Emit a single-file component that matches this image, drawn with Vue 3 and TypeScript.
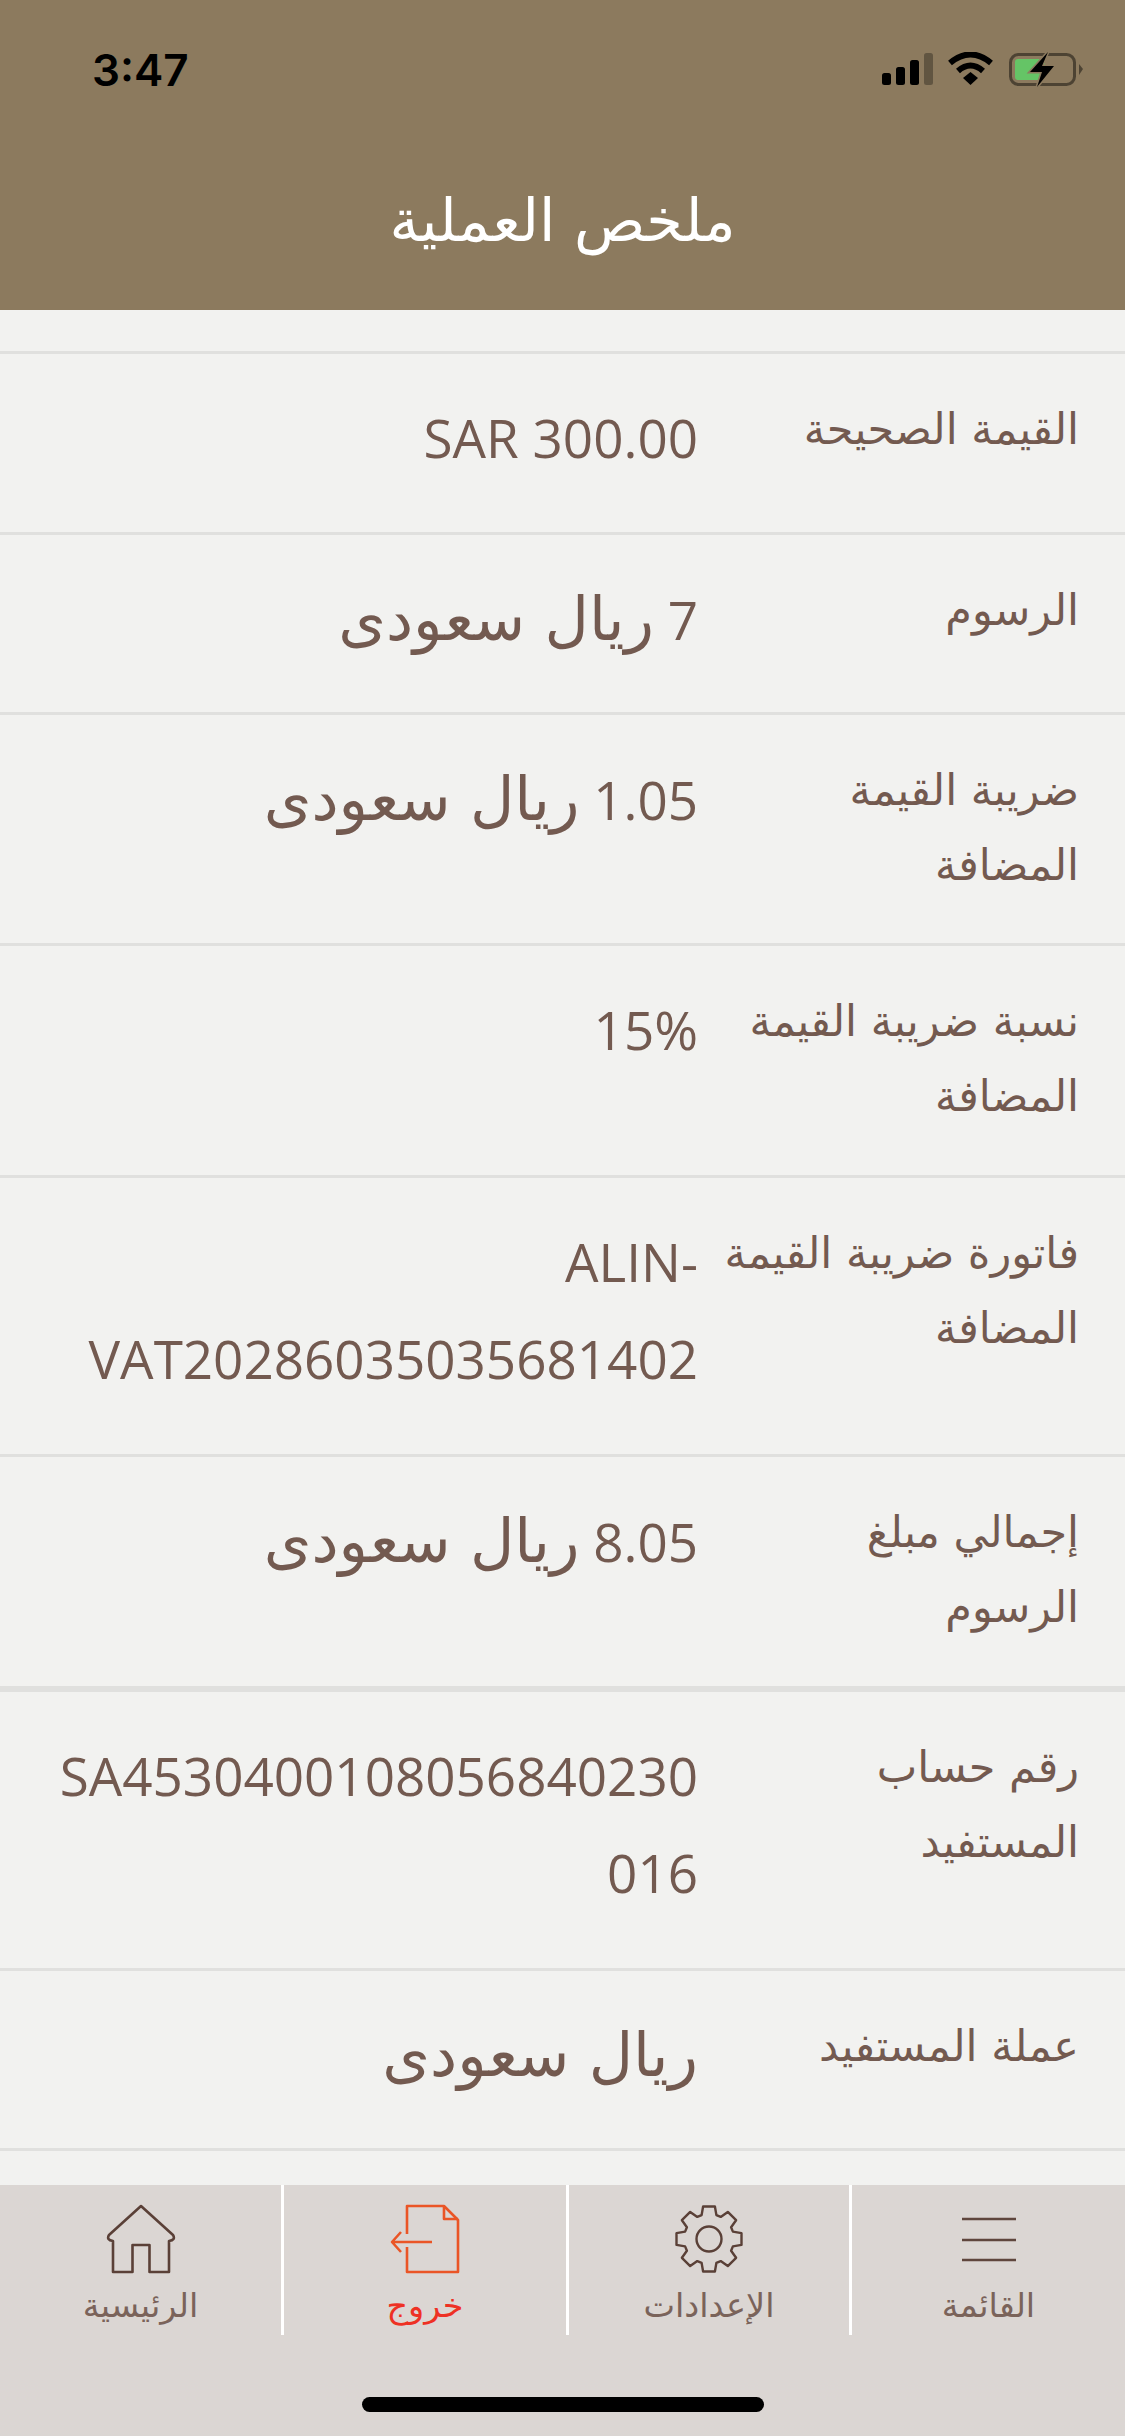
<script setup lang="ts">
interface Row {
  label: string;
  value: string;
  currency?: string;
  height: number;
}

const currency = 'ريال سعودى';

const rows: Row[] = [
  { label: 'القيمة الصحيحة', value: 'SAR 300.00', height: 181 },
  { label: 'الرسوم', value: '7', currency, height: 180 },
  { label: 'ضريبة القيمة المضافة', value: '1.05', currency, height: 231 },
  { label: 'نسبة ضريبة القيمة المضافة', value: '15%', height: 232 },
  { label: 'فاتورة ضريبة القيمة المضافة', value: 'ALIN-VAT20286035035681402', height: 279 },
  { label: 'إجمالي مبلغ الرسوم', value: '8.05', currency, height: 235 },
  { label: 'رقم حساب المستفيد', value: 'SA4530400108056840230016', height: 279 },
  { label: 'عملة المستفيد', value: '', currency, height: 183 },
];

const tabs = [
  { label: 'القائمة', icon: 'menu' },
  { label: 'الإعدادات', icon: 'gear' },
  { label: 'خروج', icon: 'exit' },
  { label: 'الرئيسية', icon: 'home' },
];

// gear outline, 8 teeth
const gearPath = (() => {
  const pts: string[] = [];
  const cx = 35;
  const cy = 35;
  for (let i = 0; i < 8; i++) {
    const a = (i * Math.PI) / 4 - Math.PI / 2;
    const p = (r: number, d: number) =>
      `${(cx + r * Math.cos(a + d)).toFixed(1)} ${(cy + r * Math.sin(a + d)).toFixed(1)}`;
    pts.push(p(25, -0.3), p(33, -0.18), p(33, 0.18), p(25, 0.3));
  }
  return 'M' + pts.join('L') + 'Z';
})();
</script>

<template>
  <div class="screen" dir="rtl">
    <header class="header" dir="ltr">
      <div class="status">
        <span class="time">3:47</span>
        <svg class="status-icons" width="202" height="36" viewBox="0 0 202 36">
          <rect x="0" y="21" width="9" height="12" rx="2.5" fill="#000" />
          <rect x="14" y="15" width="9" height="18" rx="2.5" fill="#000" />
          <rect x="28" y="8" width="9" height="25" rx="2.5" fill="#000" />
          <rect x="42" y="1" width="9" height="32" rx="2.5" fill="#000" opacity="0.3" />
          <path d="M68 11 Q88.5 -6 109 11" fill="none" stroke="#000" stroke-width="6" />
          <path d="M76 19 Q88.5 8 101 19" fill="none" stroke="#000" stroke-width="6" />
          <path d="M81 26 L88.5 20 L96 26 L88.5 33 Z" fill="#000" />
          <rect x="128.5" y="2.5" width="64" height="30" rx="8" fill="none" stroke="#000" stroke-opacity="0.45" stroke-width="3" />
          <rect x="133" y="7" width="30" height="21" rx="3" fill="#65c466" />
          <path d="M197 12 L201 17 L197 23 Z" fill="#000" opacity="0.45" />
          <path d="M166 0 L148 20 L160 20 L155 35 L172 14 L160 14 Z" fill="#000" stroke="#8c7a5e" stroke-width="3" paint-order="stroke" />
        </svg>
      </div>
      <h1 class="title" dir="rtl">ملخص العملية</h1>
    </header>

    <main class="list">
      <div
        v-for="row in rows"
        :key="row.label"
        class="row"
        :style="{ height: row.height + 'px' }"
      >
        <div class="label">{{ row.label }}</div>
        <div class="value">{{ row.value }} <span v-if="row.currency" class="currency">{{ row.currency }}</span></div>
      </div>
    </main>

    <nav class="tabbar">
      <div class="tabs">
        <div v-for="tab in tabs" :key="tab.icon" class="tab" :class="{ exit: tab.icon === 'exit' }">
          <svg class="icon" width="70" height="70" viewBox="0 0 70 70" fill="none">
            <g v-if="tab.icon === 'menu'" stroke="#5f463d" stroke-width="2.6">
              <path d="M8 15H62M8 36H62M8 56H62" />
            </g>
            <g v-else-if="tab.icon === 'gear'" stroke="#5a4037" stroke-width="2.4" stroke-linejoin="round">
              <path :d="gearPath" />
              <circle cx="35" cy="35" r="12.5" />
            </g>
            <g v-else-if="tab.icon === 'exit'" stroke="#ea5526" stroke-width="2.6" stroke-linejoin="round">
              <path d="M17 30V2H54L68 16V68H17V43" />
              <path d="M54 2V15H68" />
              <path d="M42 38H2M11 28L2 38L11 48" />
            </g>
            <g v-else stroke="#5a4037" stroke-width="2.6" stroke-linejoin="round">
              <path d="M35 2L67 31Q70 36 63 37V68H43.5V41H26.5V68H7V37Q0 36 3 31Z" />
            </g>
          </svg>
          <span class="tab-label">{{ tab.label }}</span>
        </div>
      </div>
      <div class="home-bar"></div>
    </nav>
  </div>
</template>

<style scoped>
.screen {
  width: 1125px;
  height: 2436px;
  background: #f2f2f0;
  display: flex;
  flex-direction: column;
  overflow: hidden;
  font-family: "DejaVu Sans", "Noto Sans", sans-serif;
  color: #735a50;
}

.header {
  height: 310px;
  background: #8c7a5e;
  flex-shrink: 0;
  display: flex;
  flex-direction: column;
}

.status {
  height: 181px;
  padding: 52px 41px 0 92px;
  box-sizing: border-box;
  display: flex;
  justify-content: space-between;
  align-items: flex-start;
}

.time {
  font-family: Inter, "Liberation Sans", sans-serif;
  font-weight: 600;
  font-size: 44px;
  line-height: 36px;
  color: #000;
}

.title {
  margin: 0;
  text-align: center;
  color: #fff;
  font-weight: 400;
  font-size: 59px;
  line-height: 80px;
}

.list {
  flex: 1;
  padding-top: 41px;
  overflow: hidden;
}

.row {
  box-sizing: border-box;
  border-top: 3px solid #e0e0de;
  display: flex;
  padding: 38px 46px 0 0;
}

.row:last-child {
  border-bottom: 3px solid #e0e0de;
}

.row:nth-child(6) {
  border-bottom: 3px solid #e0e0de;
}

.label {
  width: 356px;
  flex-shrink: 0;
  font-size: 43px;
  line-height: 75px;
  margin-top: 0;
}

.value {
  width: 650px;
  margin-right: 25px;
  font-family: "Open Sans", "DejaVu Sans", sans-serif;
  font-size: 53px;
  line-height: 97px;
  overflow-wrap: anywhere;
  margin-top: -3px;
}

.currency {
  font-family: "DejaVu Sans", sans-serif;
  font-size: 61px;
}

.tabbar {
  height: 251px;
  background: #dbd6d3;
  flex-shrink: 0;
  position: relative;
}

.tabs {
  display: grid;
  grid-template-columns: 276px 283px 285px 281px;
  height: 150px;
}

.tab {
  display: flex;
  flex-direction: column;
  align-items: center;
  padding-top: 19px;
  box-sizing: border-box;
  border-left: 3px solid #fff;
}

.tab:last-child {
  border-left: none;
}

.tab-label {
  margin-top: 7px;
  font-size: 33.5px;
  line-height: 50px;
  color: #7a635a;
}

.tab.exit .tab-label {
  color: #ee3124;
}

.home-bar {
  position: absolute;
  left: 362px;
  top: 212px;
  width: 402px;
  height: 15px;
  border-radius: 8px;
  background: #000;
}
</style>

<style>
html,
body {
  margin: 0;
  background: #f2f2f0;
}
</style>
